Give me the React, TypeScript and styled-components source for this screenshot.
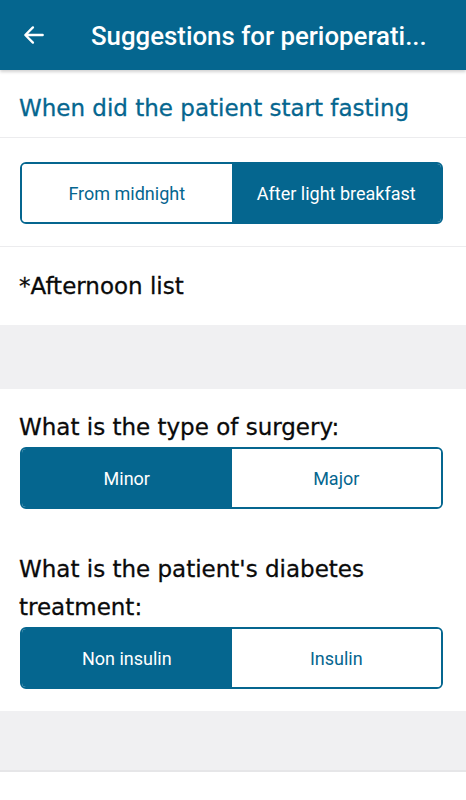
import React, { useState } from 'react';
import styled, { createGlobalStyle } from 'styled-components';

const BLUE = '#05668f';

const GlobalStyle = createGlobalStyle`
  html, body {
    margin: 0;
    padding: 0;
    background: #ffffff;
  }
  * {
    box-sizing: border-box;
  }
`;

interface ISegment {
  options: string[];
  selected: number;
  onSelect: (i: number) => void;
}

const Segmented = (props: ISegment) => (
  <StSegment>
    {props.options.map((o, i) => (
      <StSegmentButton
        key={o}
        $active={i === props.selected}
        onClick={() => props.onSelect(i)}
      >
        {o}
      </StSegmentButton>
    ))}
  </StSegment>
);

export default function App() {
  const [fasting, setFasting] = useState(1);
  const [surgery, setSurgery] = useState(0);
  const [treatment, setTreatment] = useState(0);

  return (
    <StPage>
      <GlobalStyle />
      <StHeader>
        <StBack aria-label="back">
          <svg width="26" height="26" viewBox="0 0 24 24" fill="none">
            <path
              d="M20 12H4.5M11 5l-7 7 7 7"
              stroke="#fff"
              strokeWidth="2.2"
              strokeLinecap="round"
              strokeLinejoin="round"
            />
          </svg>
        </StBack>
        <StTitle>Suggestions for perioperati...</StTitle>
      </StHeader>

      <StQuestionRow>
        <StBlueHeading>When did the patient start fasting</StBlueHeading>
      </StQuestionRow>

      <StSegmentRow>
        <Segmented
          options={['From midnight', 'After light breakfast']}
          selected={fasting}
          onSelect={setFasting}
        />
      </StSegmentRow>

      <StNoteRow>
        <StHeading>*Afternoon list</StHeading>
      </StNoteRow>

      <StGap />

      <StForm>
        <StHeading>What is the type of surgery:</StHeading>
        <StFieldSegment>
          <Segmented
            options={['Minor', 'Major']}
            selected={surgery}
            onSelect={setSurgery}
          />
        </StFieldSegment>
        <StHeading $spaced>What is the patient's diabetes treatment:</StHeading>
        <StFieldSegment>
          <Segmented
            options={['Non insulin', 'Insulin']}
            selected={treatment}
            onSelect={setTreatment}
          />
        </StFieldSegment>
      </StForm>

      <StBottomGap />
    </StPage>
  );
}

const StPage = styled.div`
  width: 466px;
  min-height: 800px;
  background: #ffffff;
  display: flex;
  flex-direction: column;
`;

const StHeader = styled.div`
  height: 70px;
  background: ${BLUE};
  display: flex;
  align-items: center;
  padding: 0 0 0 21px;
  box-shadow: 0 2px 3px rgba(0, 0, 0, 0.18);
  position: relative;
  z-index: 1;
`;

const StBack = styled.div`
  width: 26px;
  height: 26px;
  display: flex;
  align-items: center;
  justify-content: center;
  margin-right: 44px;
`;

const StTitle = styled.div`
  color: #ffffff;
  font-family: Roboto, 'Noto Sans', sans-serif;
  font-weight: 500;
  font-size: 25.8px;
  white-space: nowrap;
  margin-top: 1px;
`;

const StQuestionRow = styled.div`
  height: 68px;
  display: flex;
  align-items: center;
  padding: 0 19px;
  border-bottom: 1px solid #ececee;
`;

const StBlueHeading = styled.div`
  color: ${BLUE};
  font-family: 'DejaVu Sans', 'Noto Sans', sans-serif;
  font-size: 23px;
  -webkit-text-stroke: 0.3px ${BLUE};
  margin-top: 9px;
`;

const StSegmentRow = styled.div`
  padding: 24px 23px 22px 20px;
  border-bottom: 1px solid #ececee;
`;

const StNoteRow = styled.div`
  height: 78px;
  display: flex;
  align-items: center;
  padding: 0 19px;
`;

const StHeading = styled.div<{ $spaced?: boolean }>`
  color: #0a0a0a;
  font-family: 'DejaVu Sans', 'Noto Sans', sans-serif;
  font-size: 23px;
  -webkit-text-stroke: 0.3px #0a0a0a;
  line-height: 38px;
  margin-top: ${(p) => (p.$spaced ? '41px' : '0')};
`;

const StGap = styled.div`
  height: 64px;
  background: #f0f0f2;
`;

const StForm = styled.div`
  padding: 19px 23px 22px 19px;
  display: flex;
  flex-direction: column;
`;

const StFieldSegment = styled.div`
  margin: 1px 0 0 1px;
`;

const StSegment = styled.div`
  display: flex;
  height: 62px;
  border: 2px solid ${BLUE};
  border-radius: 6px;
  overflow: hidden;
`;

const StSegmentButton = styled.div<{ $active: boolean }>`
  flex: 1;
  display: flex;
  align-items: center;
  justify-content: center;
  background: ${(p) => (p.$active ? BLUE : '#ffffff')};
  color: ${(p) => (p.$active ? '#ffffff' : BLUE)};
  font-family: Roboto, 'Noto Sans', sans-serif;
  font-size: 18px;
  cursor: pointer;
`;

const StBottomGap = styled.div`
  height: 61px;
  background: #f0f0f2;
  border-bottom: 2px solid #e6e6e8;
`;
